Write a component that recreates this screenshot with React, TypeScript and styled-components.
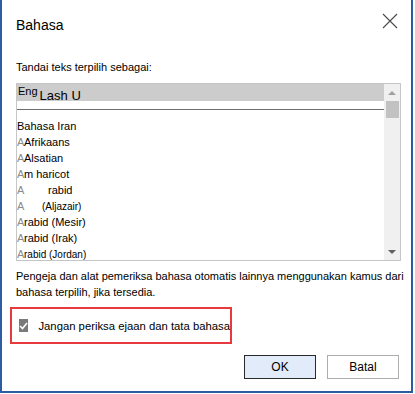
import React from "react";
import styled, { createGlobalStyle } from "styled-components";

const GlobalStyle = createGlobalStyle`
  html, body {
    margin: 0;
    padding: 0;
    background: #ffffff;
  }
  body {
    font-family: "Liberation Sans", Arial, sans-serif;
    color: #000000;
  }
`;

const Dialog = styled.div`
  box-sizing: border-box;
  width: 413px;
  height: 393px;
  border-left: 2px solid #2d5ca3;
  border-right: 2px solid #2d5ca3;
  border-bottom: 2px solid #2d5ca3;
  background: #ffffff;
  display: flex;
  flex-direction: column;
  overflow: hidden;
`;

const TitleBar = styled.div`
  flex: none;
  display: flex;
  align-items: center;
  justify-content: space-between;
  height: 42px;
  padding: 0 12px 0 14px;
`;

const Title = styled.span`
  font-size: 14px;
  margin-top: 7px;
`;

const CloseButton = styled.button`
  border: none;
  background: transparent;
  padding: 0;
  width: 18px;
  height: 18px;
  display: flex;
  align-items: center;
  justify-content: center;
`;

const Body = styled.div`
  padding: 0 12px 0 14px;
  display: flex;
  flex-direction: column;
`;

const Label = styled.div`
  font-size: 11px;
  line-height: 16px;
  margin-top: 17px;
`;

const ListBox = styled.div`
  flex: none;
  box-sizing: border-box;
  margin-top: 8px;
  width: 385px;
  height: 178px;
  border: 1px solid #c6c6c6;
  display: flex;
  overflow: hidden;
`;

const ListContent = styled.div`
  flex: 1;
  display: flex;
  flex-direction: column;
  overflow: hidden;
`;

const HeaderBand = styled.div`
  flex: none;
  height: 17px;
  background: #cccccc;
  display: flex;
  align-items: flex-end;
`;

const HeaderSmall = styled.span`
  font-size: 11px;
  line-height: 15px;
  padding-left: 1px;
  align-self: flex-start;
`;

const HeaderBig = styled.span`
  font-size: 13px;
  line-height: 15px;
  padding-left: 2px;
  margin-bottom: -2px;
`;

const Divider = styled.div`
  flex: none;
  margin-top: 8px;
  height: 1px;
  background: #6e6e6e;
`;

const Items = styled.div`
  margin-top: 8px;
  display: flex;
  flex-direction: column;
`;

const Item = styled.div`
  flex: none;
  height: 16px;
  line-height: 16px;
  font-size: 11px;
  white-space: nowrap;
  display: flex;
  align-items: baseline;
`;

const Ghost = styled.span`
  color: #8c8c8c;
  width: 7px;
  flex: none;
`;

const ItemText = styled.span<{ $indent?: number; $small?: boolean }>`
  padding-left: ${({ $indent }) => $indent ?? 0}px;
  font-size: ${({ $small }) => ($small ? 10 : 11)}px;
`;

const ScrollBar = styled.div`
  width: 16px;
  background: #f0f0f0;
  display: flex;
  flex-direction: column;
  align-items: center;
`;

const ArrowUp = styled.div`
  margin-top: 7px;
  width: 0;
  height: 0;
  border-left: 4px solid transparent;
  border-right: 4px solid transparent;
  border-bottom: 4px solid #a0a0a0;
`;

const Thumb = styled.div`
  margin-top: 6px;
  width: 13px;
  height: 17px;
  background: #c2c2c2;
`;

const Spacer = styled.div`
  flex: 1;
`;

const ArrowDown = styled.div`
  margin-bottom: 6px;
  width: 0;
  height: 0;
  border-left: 4px solid transparent;
  border-right: 4px solid transparent;
  border-top: 4px solid #606060;
`;

const Description = styled.p`
  margin: 7px 0 0 0;
  font-size: 11px;
  line-height: 16px;
  white-space: nowrap;
`;

const Highlight = styled.div`
  flex: none;
  box-sizing: border-box;
  margin: 7px 0 0 -6px;
  width: 222px;
  height: 37px;
  border: 2px solid #e8393d;
  display: flex;
  align-items: center;
  padding-left: 7px;
  gap: 10px;
`;

const CheckBox = styled.span`
  box-sizing: border-box;
  width: 13px;
  height: 13px;
  background: #7a7a7a;
  display: flex;
  align-items: center;
  justify-content: center;
`;

const CheckLabel = styled.span`
  font-size: 11.3px;
  white-space: nowrap;
`;

const ButtonRow = styled.div`
  display: flex;
  justify-content: flex-end;
  gap: 11px;
  margin-top: 11px;
`;

const Button = styled.button<{ $primary?: boolean }>`
  box-sizing: border-box;
  width: 72px;
  height: 24px;
  font-family: "Liberation Sans", Arial, sans-serif;
  font-size: 12px;
  color: #000000;
  background: ${({ $primary }) => ($primary ? "#e1ebfa" : "#ffffff")};
  border: 1px solid ${({ $primary }) => ($primary ? "#2a2a2a" : "#adadad")};
  padding: 0;
`;

const items: { ghost: string; text: string; indent?: number; small?: boolean }[] = [
  { ghost: "", text: "Bahasa Iran" },
  { ghost: "A", text: "Afrikaans" },
  { ghost: "A", text: "Alsatian" },
  { ghost: "A", text: "m haricot" },
  { ghost: "A", text: "rabid", indent: 24 },
  { ghost: "A", text: "(Aljazair)", indent: 18, small: true },
  { ghost: "A", text: "rabid (Mesir)" },
  { ghost: "A", text: "rabid (Irak)" },
  { ghost: "A", text: "rabid (Jordan)", small: true },
];

export default function App() {
  return (
    <>
      <GlobalStyle />
      <Dialog>
        <TitleBar>
          <Title>Bahasa</Title>
          <CloseButton aria-label="Tutup">
            <svg width="16" height="16" viewBox="0 0 16 16">
              <path d="M1 1 L15 15 M15 1 L1 15" stroke="#4a4a4a" strokeWidth="1.1" />
            </svg>
          </CloseButton>
        </TitleBar>
        <Body>
          <Label>Tandai teks terpilih sebagai:</Label>
          <ListBox>
            <ListContent>
              <HeaderBand>
                <HeaderSmall>Eng</HeaderSmall>
                <HeaderBig>Lash U</HeaderBig>
              </HeaderBand>
              <Divider />
              <Items>
                {items.map((it, i) => (
                  <Item key={i}>
                    {it.ghost && <Ghost>{it.ghost}</Ghost>}
                    <ItemText $indent={it.indent} $small={it.small}>
                      {it.text}
                    </ItemText>
                  </Item>
                ))}
              </Items>
            </ListContent>
            <ScrollBar>
              <ArrowUp />
              <Thumb />
              <Spacer />
              <ArrowDown />
            </ScrollBar>
          </ListBox>
          <Description>
            Pengeja dan alat pemeriksa bahasa otomatis lainnya menggunakan kamus dari
            <br />
            bahasa terpilih, jika tersedia.
          </Description>
          <Highlight>
            <CheckBox>
              <svg width="9" height="8" viewBox="0 0 9 8">
                <path d="M1 4 L3.5 6.5 L8 1" stroke="#ffffff" strokeWidth="1.6" fill="none" />
              </svg>
            </CheckBox>
            <CheckLabel>Jangan periksa ejaan dan tata bahasa</CheckLabel>
          </Highlight>
          <ButtonRow>
            <Button $primary>OK</Button>
            <Button>Batal</Button>
          </ButtonRow>
        </Body>
      </Dialog>
    </>
  );
}
